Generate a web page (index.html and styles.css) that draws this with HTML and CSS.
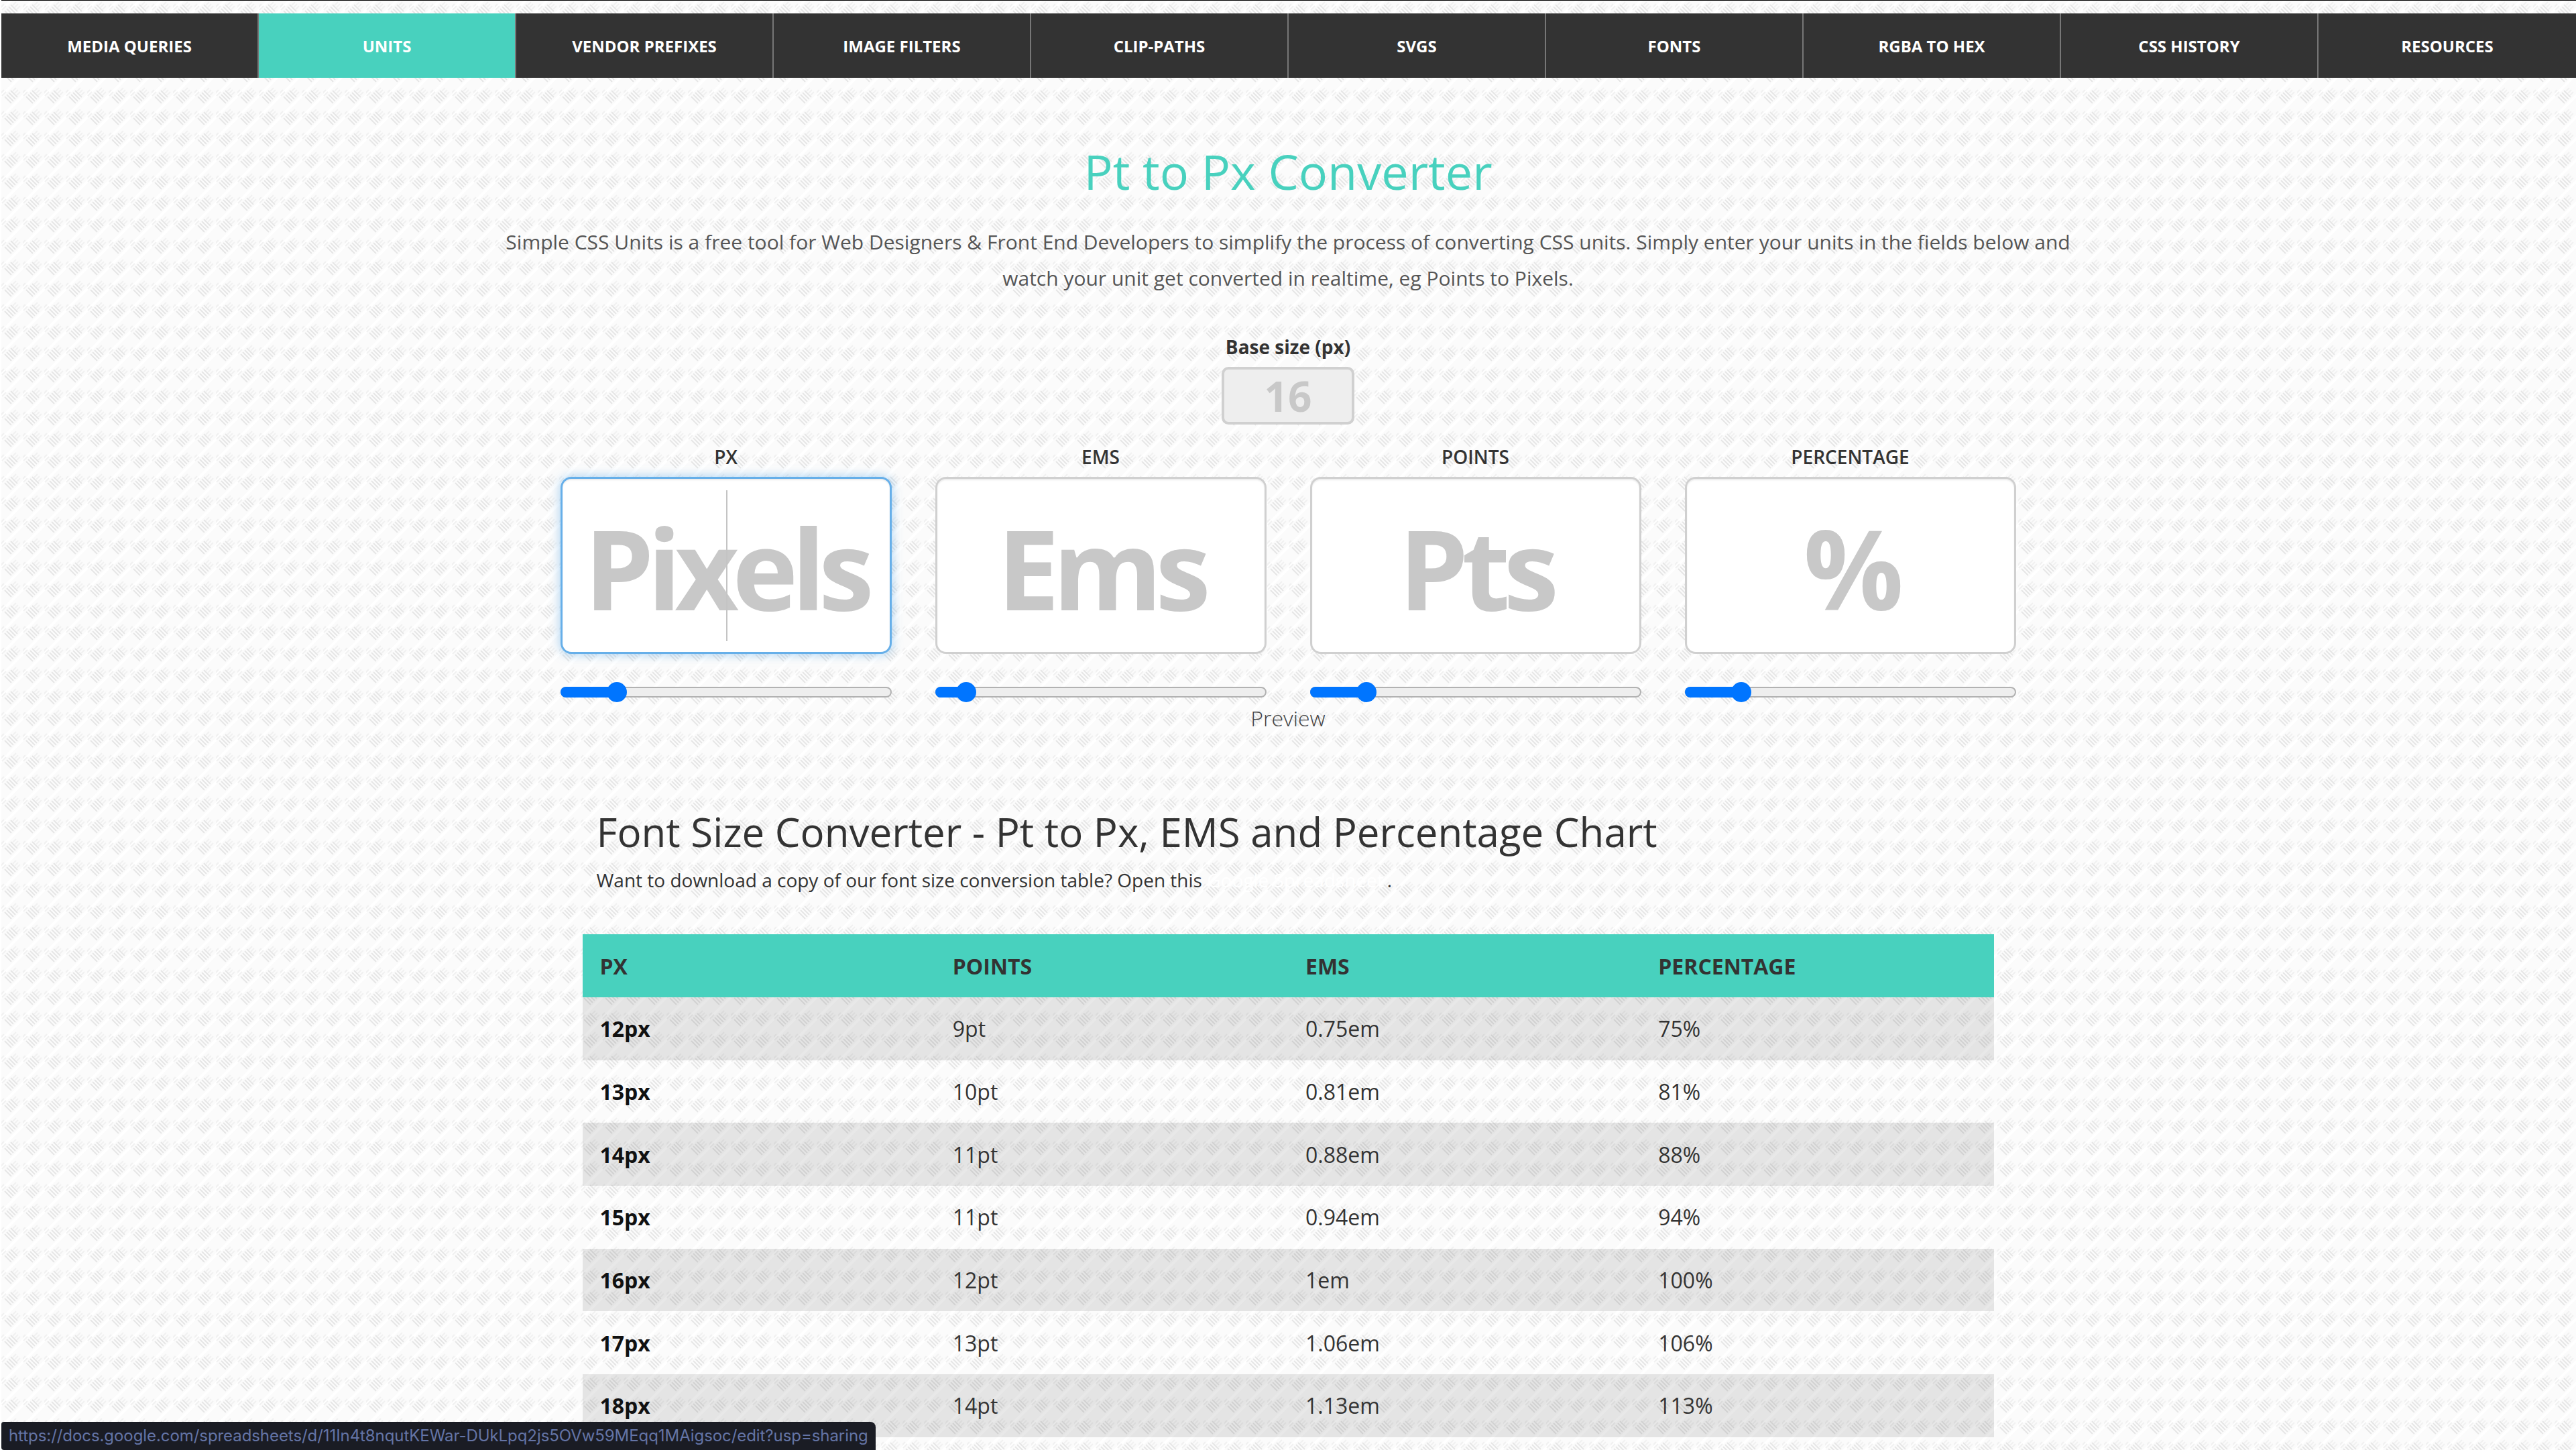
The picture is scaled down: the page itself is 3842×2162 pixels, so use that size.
FILE: index.html
```html
<!DOCTYPE html>
<html lang="en">
<head>
  <meta charset="UTF-8" />
  <title>Pt to Px Converter</title>
  <link rel="stylesheet" href="styles.css">
</head>
<body>
  <nav class="nav">
    <a class="nav-item" href="#">Media Queries</a>
    <a class="nav-item active" href="#">Units</a>
    <a class="nav-item" href="#">Vendor Prefixes</a>
    <a class="nav-item" href="#">Image Filters</a>
    <a class="nav-item" href="#">Clip-Paths</a>
    <a class="nav-item" href="#">SVGs</a>
    <a class="nav-item" href="#">Fonts</a>
    <a class="nav-item" href="#">RGBA to Hex</a>
    <a class="nav-item" href="#">CSS History</a>
    <a class="nav-item" href="#">Resources</a>
  </nav>

  <main class="main">
    <h1 class="title">Pt to Px Converter</h1>
    <p class="intro">Simple CSS Units is a free tool for Web Designers &amp; Front End Developers to simplify the process of converting CSS units. Simply enter your units in the fields below and watch your unit get converted in realtime, eg Points to Pixels.</p>

    <div class="base">
      <label class="base-label" for="baseSize">Base size (px)</label>
      <input class="base-input" id="baseSize" type="text" placeholder="16" />
    </div>

    <div class="fields">
      <div class="field">
        <label class="field-label">PX</label>
        <div class="field-box focused">
          <input class="field-input" type="text" placeholder="Pixels" />
          <span class="caret"></span>
        </div>
        <div class="slider"><div class="slider-fill" style="width: 17.2%"><span class="slider-thumb"></span></div></div>
      </div>
      <div class="field">
        <label class="field-label">EMS</label>
        <div class="field-box">
          <input class="field-input" type="text" placeholder="Ems" />
        </div>
        <div class="slider"><div class="slider-fill" style="width: 9.4%"><span class="slider-thumb"></span></div></div>
      </div>
      <div class="field">
        <label class="field-label">POINTS</label>
        <div class="field-box">
          <input class="field-input" type="text" placeholder="Pts" />
        </div>
        <div class="slider"><div class="slider-fill" style="width: 17.2%"><span class="slider-thumb"></span></div></div>
      </div>
      <div class="field">
        <label class="field-label">PERCENTAGE</label>
        <div class="field-box">
          <input class="field-input" type="text" placeholder="%" />
        </div>
        <div class="slider"><div class="slider-fill" style="width: 17.2%"><span class="slider-thumb"></span></div></div>
      </div>
    </div>

    <div class="preview">Preview</div>

    <section class="chart">
      <h2 class="chart-title">Font Size Converter - Pt to Px, EMS and Percentage Chart</h2>
      <p class="chart-note">Want to download a copy of our font size conversion table? Open this <a class="sheet-link" href="#">Google Spreadsheet</a>.</p>
      <table class="chart-table">
        <thead>
          <tr><th>PX</th><th>POINTS</th><th>EMS</th><th>PERCENTAGE</th></tr>
        </thead>
        <tbody>
          <tr><td>12px</td><td>9pt</td><td>0.75em</td><td>75%</td></tr>
          <tr><td>13px</td><td>10pt</td><td>0.81em</td><td>81%</td></tr>
          <tr><td>14px</td><td>11pt</td><td>0.88em</td><td>88%</td></tr>
          <tr><td>15px</td><td>11pt</td><td>0.94em</td><td>94%</td></tr>
          <tr><td>16px</td><td>12pt</td><td>1em</td><td>100%</td></tr>
          <tr><td>17px</td><td>13pt</td><td>1.06em</td><td>106%</td></tr>
          <tr><td>18px</td><td>14pt</td><td>1.13em</td><td>113%</td></tr>
        </tbody>
      </table>
    </section>
  </main>

  <div class="status-bubble">https://docs.google.com/spreadsheets/d/11In4t8nqutKEWar-DUkLpq2js5OVw59MEqq1MAigsoc/edit?usp=sharing</div>
</body>
</html>
```

FILE: styles.css
```css
html {
  height: 100%;
  overflow: hidden;
  background: #fff;
}
body {
  height: 100%;
  margin: 0 0 0 2px;
  box-sizing: border-box;
  border-top: 1px solid #000;
  overflow: hidden;
  font-family: 'Open Sans', sans-serif;
  color: #333;
  background-color: #fbfbfb;
  background-image: url("data:image/svg+xml,%3Csvg xmlns='http://www.w3.org/2000/svg' width='32' height='32'%3E%3Cg fill='none'%3E%3Cpath stroke='%23fff' stroke-width='4' d='M-4 18L18 -4M-4 50L50 -4'/%3E%3Cpath stroke='%23f1f1f1' stroke-width='2' d='M17 7l5 -5M20 10l5 -5M23 13l5 -5M1 14l6 -6M-2 11l6 -6'/%3E%3Cpath stroke='%23e6e6e6' stroke-width='1.8' d='M5 15l10 10M8 12l10 10M11 9l10 10M14 6l10 10'/%3E%3C/g%3E%3C/svg%3E");
}

.nav {
  display: flex;
  margin-top: 19px;
}
.nav-item {
  width: 384px;
  height: 96px;
  box-sizing: border-box;
  display: flex;
  align-items: center;
  justify-content: center;
  background: #333;
  border-right: 2px solid #777;
  color: #fff;
  font-size: 24px;
  font-weight: 700;
  text-transform: uppercase;
  text-decoration: none;
}
.nav-item.active {
  background: #48d1be;
}
.nav-item:last-child {
  border-right: none;
}

.main {
  display: flex;
  flex-direction: column;
  align-items: center;
  margin-left: -2px;
}
.title {
  margin: 89px 0 0;
  font-size: 72px;
  line-height: 100px;
  font-weight: 400;
  color: #48d1be;
}
.intro {
  width: 2380px;
  margin: 29px 0 0;
  text-align: center;
  font-size: 30px;
  line-height: 54px;
  font-weight: 400;
  color: #555;
}

.base {
  display: flex;
  flex-direction: column;
  align-items: center;
  margin-top: 55px;
}
.base-label {
  font-size: 28px;
  line-height: 40px;
  font-weight: 700;
}
.base-input {
  width: 198px;
  height: 86px;
  margin-top: 10px;
  box-sizing: border-box;
  border: 4px solid #d0d0d0;
  border-radius: 10px;
  background: #eee;
  text-align: center;
  font-family: inherit;
  font-size: 62px;
  font-weight: 700;
  padding: 0;
}
.base-input::placeholder {
  color: #c8c8c8;
  opacity: 1;
}

.fields {
  display: flex;
  gap: 65px;
  margin-top: 28px;
}
.field {
  width: 494px;
  display: flex;
  flex-direction: column;
  align-items: center;
}
.field-label {
  font-size: 28px;
  line-height: 40px;
  font-weight: 600;
}
.field-box {
  position: relative;
  width: 100%;
  height: 264px;
  margin-top: 10px;
}
.field-input {
  width: 100%;
  height: 100%;
  box-sizing: border-box;
  border: 3px solid #d0d0d0;
  border-radius: 16px;
  background: #fff;
  box-shadow: inset 0 2px 2px rgba(0, 0, 0, 0.075);
  text-align: center;
  font-family: inherit;
  font-size: 166px;
  font-weight: 700;
  letter-spacing: -0.06em;
  padding: 6px 0 0;
  outline: none;
}
.field-input::placeholder {
  color: #c8c8c8;
  opacity: 1;
}
.field-box.focused .field-input {
  border-color: #66afe9;
  box-shadow: inset 0 2px 2px rgba(0, 0, 0, 0.075), 0 0 16px rgba(102, 175, 233, 0.6);
}
.caret {
  position: absolute;
  left: 247px;
  top: 20px;
  width: 2px;
  height: 225px;
  background: #c4c4c4;
}

.slider {
  width: 100%;
  height: 16px;
  margin-top: 49px;
  box-sizing: border-box;
  border: 2px solid #b2b2b2;
  border-radius: 8px;
  background: #eee;
}
.slider-fill {
  position: relative;
  height: 16px;
  margin: -2px 0 0 -2px;
  background: #0075ff;
  border-radius: 8px 0 0 8px;
}
.slider-thumb {
  position: absolute;
  right: -15px;
  top: -7px;
  width: 30px;
  height: 30px;
  border-radius: 50%;
  background: #0075ff;
}

.preview {
  margin-top: 11px;
  font-size: 32px;
  line-height: 40px;
  font-weight: 300;
  color: #444;
}

.chart {
  width: 2105px;
  margin-top: 107px;
}
.chart-title {
  margin: 0 0 0 21px;
  font-size: 60px;
  line-height: 84px;
  font-weight: 400;
}
.chart-note {
  margin: 6px 0 0 21px;
  font-size: 28px;
  line-height: 48px;
}
.sheet-link {
  margin-right: 5px;
  color: #fff;
  text-decoration: none;
}

.chart-table {
  width: 100%;
  margin-top: 57px;
  border-collapse: collapse;
  table-layout: fixed;
}
.chart-table th {
  height: 94px;
  padding: 0 26px;
  background: #48d1be;
  text-align: left;
  font-size: 32px;
  font-weight: 700;
}
.chart-table td {
  height: 93.7px;
  padding: 0 26px;
  font-size: 32px;
}
.chart-table td:first-child {
  font-weight: 700;
  color: #111;
}
.chart-table tbody tr:nth-child(odd) {
  background: rgba(0, 0, 0, 0.09);
}

.status-bubble {
  position: absolute;
  left: 2px;
  bottom: 0;
  height: 42px;
  width: 1304px;
  box-sizing: border-box;
  padding-left: 11px;
  background: #1a1c24;
  border-radius: 4px 8px 0 4px;
  color: #6474a6;
  font-family: Inter, sans-serif;
  font-size: 24px;
  letter-spacing: -0.07px;
  line-height: 42px;
  white-space: nowrap;
  overflow: hidden;
}
```
